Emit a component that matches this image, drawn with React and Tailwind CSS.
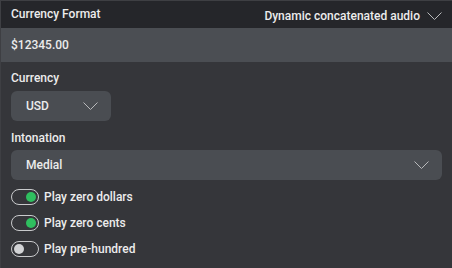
import React from "react";

function Chevron({ className }) {
  return (
    <svg className={className} width="15" height="8" viewBox="0 0 15 8" fill="none">
      <path d="M0.5 0.5 L7.5 7.5 L14.5 0.5" stroke="currentColor" strokeWidth="1" />
    </svg>
  );
}

function Toggle({ on, label }) {
  return (
    <div className="flex items-center h-[26px]">
      <div className={"w-[28px] h-[16px] rounded-full border-[1.5px] border-[#c9cacc] flex items-center px-[2px] " + (on ? "justify-end" : "justify-start")}>
        <div className={"w-[10px] h-[10px] rounded-full " + (on ? "bg-[#2fbf5f]" : "bg-[#d2d3d5]")} />
      </div>
      <span className="ml-[5px] text-[12px] font-medium text-[#ececec]">{label}</span>
    </div>
  );
}

export default function App() {
  return (
    <div className="w-[452px] h-[268px] bg-[#35363a] text-[#ececec] overflow-hidden border-t border-l border-[#3e3f43]" style={{ fontFamily: "Roboto, 'Liberation Sans', sans-serif" }}>
      <div className="h-[27px] bg-[#25262a] flex items-start justify-between pl-[10px] pr-[10px]">
        <span className="text-[12px] font-medium mt-[4px]">Currency Format</span>
        <div className="flex items-center mt-[6px]">
          <span className="text-[12px] font-medium">Dynamic concatenated audio</span>
          <Chevron className="ml-[7px] text-[#b8b9bb]" />
        </div>
      </div>
      <div className="h-[34px] bg-[#4b4e53] flex items-center pl-[10px]">
        <span className="text-[12px] font-medium">$12345.00</span>
      </div>
      <div className="pl-[10px] pr-[10px]">
        <div className="text-[12px] font-medium mt-[8px] leading-[16px]">Currency</div>
        <div className="mt-[5px] w-[100px] h-[30px] rounded-[6px] bg-[#4a4d52] flex items-center justify-between pl-[15px] pr-[13px]">
          <span className="text-[12px] font-medium">USD</span>
          <Chevron className="text-[#b8b9bb]" />
        </div>
        <div className="text-[12px] font-medium mt-[9px] leading-[16px]">Intonation</div>
        <div className="mt-[4px] w-[431px] h-[30px] rounded-[6px] bg-[#4a4d52] flex items-center justify-between pl-[15px] pr-[13px]">
          <span className="text-[12px] font-medium">Medial</span>
          <Chevron className="text-[#b8b9bb]" />
        </div>
        <div className="mt-[4px] flex flex-col">
          <Toggle on label="Play zero dollars" />
          <Toggle on label="Play zero cents" />
          <Toggle label="Play pre-hundred" />
        </div>
      </div>
    </div>
  );
}
